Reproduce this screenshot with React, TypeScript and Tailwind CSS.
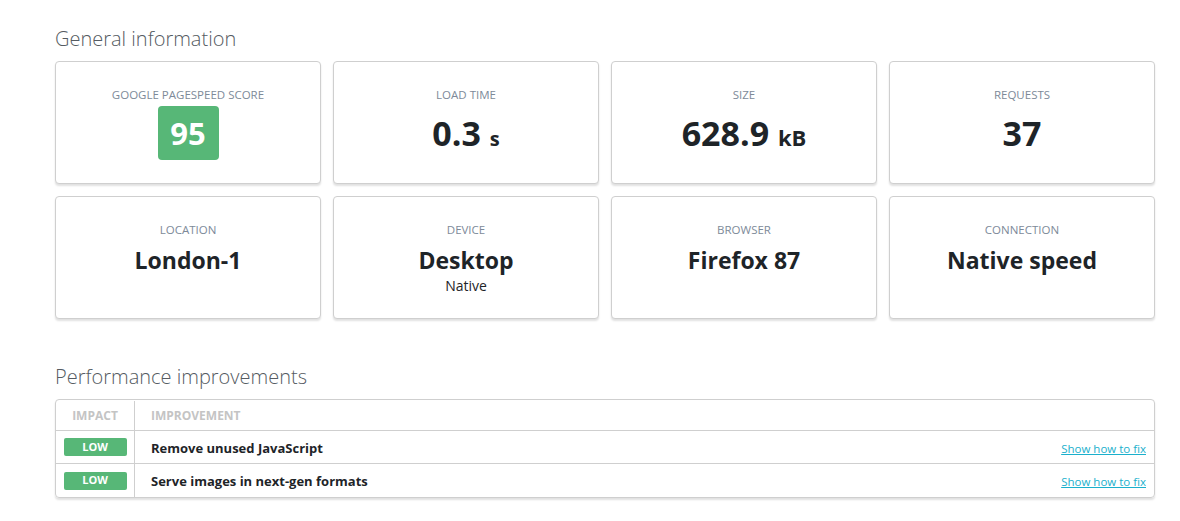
import React from 'react';

type Stat = {
  label: string;
  value: React.ReactNode;
  sub?: string;
};

const topStats: Stat[] = [
  {
    label: 'Google PageSpeed Score',
    value: (
      <span className="inline-flex h-[54px] w-[61px] items-center justify-center rounded-[4px] bg-[#57b777] text-[31px] font-bold text-white">
        95
      </span>
    ),
  },
  {
    label: 'Load time',
    value: (
      <span className="text-[34px] font-bold leading-none">
        0.3 <span className="text-[20px]">s</span>
      </span>
    ),
  },
  {
    label: 'Size',
    value: (
      <span className="text-[34px] font-bold leading-none">
        628.9 <span className="text-[22px]">kB</span>
      </span>
    ),
  },
  {
    label: 'Requests',
    value: <span className="text-[34px] font-bold leading-none">37</span>,
  },
];

const bottomStats: Stat[] = [
  { label: 'Location', value: 'London-1' },
  { label: 'Device', value: 'Desktop', sub: 'Native' },
  { label: 'Browser', value: 'Firefox 87' },
  { label: 'Connection', value: 'Native speed' },
];

const improvements = ['Remove unused JavaScript', 'Serve images in next-gen formats'];

const StatCard: React.FC<{ stat: Stat; big?: boolean }> = ({ stat, big }) => (
  <div className="flex h-[123px] flex-col items-center rounded-[4px] border border-[#cfcfcf] bg-white pt-[26px] shadow-[0_2px_2px_rgba(0,0,0,0.12)]">
    <div className="text-[11.5px] uppercase leading-[14px] text-[#7d8a99]">{stat.label}</div>
    {big ? (
      <div className="mt-[4px] flex h-[54px] items-center text-[#1e2428]">{stat.value}</div>
    ) : (
      <>
        <div className="mt-[8px] text-[23px] font-bold leading-[30px] text-[#1e2428]">{stat.value}</div>
        {stat.sub && <div className="text-[14px] leading-[22px] text-[#1e2428]">{stat.sub}</div>}
      </>
    )}
  </div>
);

export default function App() {
  return (
    <div className="min-h-screen bg-white px-[55px] pt-[26px] font-['Open_Sans',sans-serif]">
      <div className="w-[1100px]">
        {/* General information */}
        <h2 className="text-[20px] font-light leading-[26px] text-[#555b62]">General information</h2>
        <div className="mt-[9px] grid grid-cols-4 gap-[12px]">
          {topStats.map((s) => (
            <StatCard key={s.label} stat={s} big />
          ))}
          {bottomStats.map((s) => (
            <StatCard key={s.label} stat={s} />
          ))}
        </div>

        {/* Performance improvements */}
        <h2 className="mt-[45px] text-[20px] font-light leading-[26px] text-[#555b62]">Performance improvements</h2>
        <div className="mt-[9px] overflow-hidden rounded-[4px] border border-[#cfcfcf] shadow-[0_2px_2px_rgba(0,0,0,0.12)]">
          <div className="flex h-[31px] items-center border-b border-[#cfcfcf] pt-[1px] text-[12px] font-bold uppercase text-[#c4c4c4]">
            <div className="flex h-full w-[79px] items-center justify-center border-r border-[#cfcfcf]">Impact</div>
            <div className="pl-[16px]">Improvement</div>
          </div>
          {improvements.map((item, i) => (
            <div
              key={item}
              className={`flex h-[33px] items-center ${i < improvements.length - 1 ? 'border-b border-[#cfcfcf]' : ''}`}
            >
              <div className="flex h-full w-[79px] items-center justify-center border-r border-[#cfcfcf]">
                <span className="flex h-[18px] w-[63px] items-center justify-center rounded-[2px] bg-[#57b777] text-[11px] font-bold text-white">
                  LOW
                </span>
              </div>
              <div className="flex-1 pl-[16px] pt-[3px] text-[13px] font-bold text-[#1e2428]">{item}</div>
              <a href="#" className="pr-[8px] pt-[3px] text-[11.5px] text-[#1ab0cc] underline">
                Show how to fix
              </a>
            </div>
          ))}
        </div>
      </div>
    </div>
  );
}
